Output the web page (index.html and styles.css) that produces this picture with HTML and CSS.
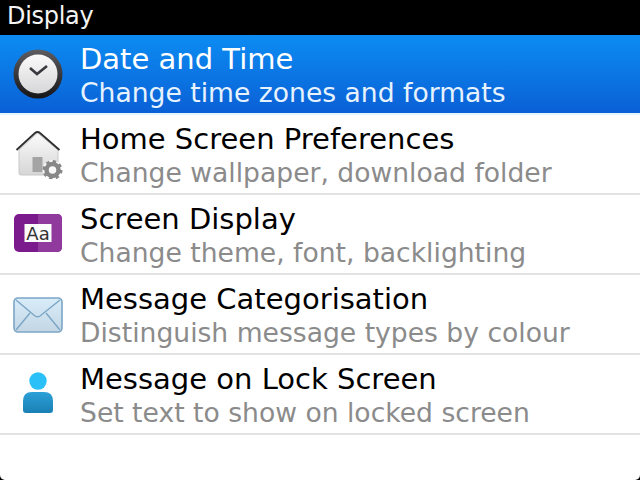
FILE: index.html
```html
<!DOCTYPE html>
<html lang="en">
<head>
    <meta charset="UTF-8">
    <title>Display</title>
    <link rel="stylesheet" href="styles.css">
</head>
<body>
    <div class="screen">
        <div class="title-bar">Display</div>

        <ul class="menu">
            <li class="menu-item selected">
                <div class="icon">
                    <svg width="50" height="50" viewBox="0 0 50 50">
                        <defs>
                            <linearGradient id="clockRim" x1="0" y1="0" x2="0" y2="1">
                                <stop offset="0" stop-color="#5e5e62"/>
                                <stop offset="1" stop-color="#151518"/>
                            </linearGradient>
                            <linearGradient id="clockFace" x1="0" y1="0" x2="0" y2="1">
                                <stop offset="0" stop-color="#fbfbfb"/>
                                <stop offset="1" stop-color="#d6d6d8"/>
                            </linearGradient>
                        </defs>
                        <circle cx="25" cy="25" r="24.5" fill="url(#clockRim)"/>
                        <circle cx="25" cy="25" r="19.5" fill="url(#clockFace)"/>
                        <path d="M17 19 L24 25 L34 17" fill="none" stroke="#3a3a3e" stroke-width="2.6"/>
                    </svg>
                </div>
                <div class="text">
                    <div class="name">Date and Time</div>
                    <div class="desc">Change time zones and formats</div>
                </div>
            </li>
            <li class="menu-item">
                <div class="icon">
                    <svg width="50" height="50" viewBox="0 0 50 50">
                        <defs>
                            <linearGradient id="houseWall" x1="0" y1="0" x2="0" y2="1">
                                <stop offset="0" stop-color="#fbfbfb"/>
                                <stop offset="1" stop-color="#d6d6d6"/>
                            </linearGradient>
                        </defs>
                        <path d="M6 21 L24.5 4 L45 21 V44 Q45 46 43 46 H8 Q6 46 6 44 Z" fill="url(#houseWall)" stroke="#c8c8c8" stroke-width="1"/>
                        <path d="M3.5 21 L22 4 Q24.5 2 27 4 L46.5 21" fill="none" stroke="#2e2e2e" stroke-width="1.8"/>
                        <rect x="19.5" y="28" width="10" height="15" fill="#a4a4a4"/>
                        <circle cx="39.5" cy="41" r="10" fill="#fff" opacity="0.8"/>
                        <circle cx="39.5" cy="41" r="6" fill="none" stroke="#888" stroke-width="4.5"/>
                        <circle cx="39.5" cy="41" r="8.6" fill="none" stroke="#888" stroke-width="2.8" stroke-dasharray="3.4 3.35"/>
                    </svg>
                </div>
                <div class="text">
                    <div class="name">Home Screen Preferences</div>
                    <div class="desc">Change wallpaper, download folder</div>
                </div>
            </li>
            <li class="menu-item">
                <div class="icon">
                    <svg width="50" height="50" viewBox="0 0 50 50">
                        <rect x="1" y="5" width="48" height="38" rx="5" fill="#7a1a8c"/>
                        <path d="M25 5 H44 Q49 5 49 10 V38 Q49 43 44 43 H25 Z" fill="#8f3a9c"/>
                        <rect x="11.5" y="15" width="27" height="18" fill="#fbfbfb"/>
                        <text x="25" y="30.5" class="aa">Aa</text>
                    </svg>
                </div>
                <div class="text">
                    <div class="name">Screen Display</div>
                    <div class="desc">Change theme, font, backlighting</div>
                </div>
            </li>
            <li class="menu-item">
                <div class="icon">
                    <svg width="50" height="50" viewBox="0 0 50 50">
                        <defs>
                            <linearGradient id="envelope" x1="0" y1="0" x2="0" y2="1">
                                <stop offset="0" stop-color="#d8ecfa"/>
                                <stop offset="1" stop-color="#c4d6e4"/>
                            </linearGradient>
                        </defs>
                        <rect x="1" y="9" width="48" height="34" rx="4" fill="url(#envelope)" stroke="#7ba6c6" stroke-width="1.6"/>
                        <path d="M3 11 L22 27 Q24.5 28.5 27 27 L47 11 M3 41 L17 24 M47 41 L33 24" fill="none" stroke="#7ba6c6" stroke-width="1.4"/>
                    </svg>
                </div>
                <div class="text">
                    <div class="name">Message Categorisation</div>
                    <div class="desc">Distinguish message types by colour</div>
                </div>
            </li>
            <li class="menu-item">
                <div class="icon">
                    <svg width="50" height="50" viewBox="0 0 50 50">
                        <defs>
                            <linearGradient id="personBody" x1="0" y1="0" x2="0" y2="1">
                                <stop offset="0" stop-color="#2ba0d8"/>
                                <stop offset="1" stop-color="#1a80b4"/>
                            </linearGradient>
                        </defs>
                        <circle cx="25" cy="12" r="8.7" fill="#2cc0f8"/>
                        <path d="M10 32 Q10 23 19 23 H31 Q40 23 40 32 V41 Q40 44 37 44 H13 Q10 44 10 41 Z" fill="url(#personBody)"/>
                    </svg>
                </div>
                <div class="text">
                    <div class="name">Message on Lock Screen</div>
                    <div class="desc">Set text to show on locked screen</div>
                </div>
            </li>
        </ul>
    </div>
</body>
</html>
```

FILE: styles.css
```css
* {
    margin: 0;
    padding: 0;
    box-sizing: border-box;
}

html, body {
    height: 100%;
}

body {
    font-family: 'DejaVu Sans', sans-serif;
    background: #000;
    overflow: hidden;
}

.screen {
    height: 100%;
    background: #fff;
    border-radius: 0 0 5px 5px;
}

.title-bar {
    height: 35px;
    padding-left: 7px;
    background: #000;
    color: #f4f4f4;
    font-size: 24px;
    line-height: 33px;
    letter-spacing: -0.3px;
}

.menu {
    list-style: none;
}

.menu-item {
    display: flex;
    align-items: center;
    height: 80px;
    border-bottom: 2px solid #e2e2e2;
    color: #000;
}

.menu-item.selected {
    background: linear-gradient(180deg, #0c8cf2 0%, #0a60d6 100%);
    border-bottom-color: #e6f4fc;
    color: #fff;
}

.icon {
    display: flex;
    justify-content: center;
    align-items: center;
    width: 80px;
    flex-shrink: 0;
    padding-right: 5px;
}

.text {
    padding-top: 2px;
}

.name {
    font-size: 29px;
    line-height: 34px;
}

.desc {
    font-size: 26.6px;
    line-height: 33px;
    color: #8b8b8b;
}

.selected .desc {
    color: #e6f3fe;
}

.aa {
    font-family: 'DejaVu Sans', sans-serif;
    font-size: 18px;
    fill: #333;
    text-anchor: middle;
}
```
